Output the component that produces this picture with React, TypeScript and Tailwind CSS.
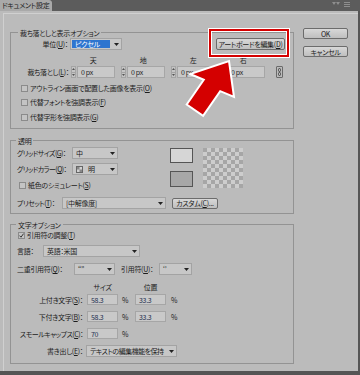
import React from "react";

function Caret() {
  return (
    <svg width="5" height="3" viewBox="0 0 5 3">
      <path d="M0 0h5L2.5 3z" fill="#222" />
    </svg>
  );
}

function Check({ on }: { on?: boolean }) {
  return (
    <span className="flex h-[7px] w-[7px] shrink-0 items-center justify-center border border-[#8b8b8b] bg-[#c4c4c4]">
      {on && (
        <svg width="5" height="5" viewBox="0 0 5 5">
          <path d="M0.5 2.6L2 4.2L4.6 0.6" fill="none" stroke="#333" strokeWidth="1" />
        </svg>
      )}
    </span>
  );
}

function Select({ className, children, hl }: { className: string; children: React.ReactNode; hl?: boolean }) {
  return (
    <div className={`flex h-[12px] shrink-0 items-stretch border border-[#a3a3a3] bg-[#c7c7c7] ${className}`}>
      <div
        className={`flex min-w-0 flex-1 items-center overflow-hidden pl-[3px] ${
          hl ? "m-[1px] bg-[#2e75cf] text-white" : ""
        }`}
      >
        {children}
      </div>
      <div className="flex w-[10px] items-center justify-center">
        <Caret />
      </div>
    </div>
  );
}

function Btn({ className, children }: { className: string; children: React.ReactNode }) {
  return (
    <div
      className={`flex shrink-0 items-center justify-center rounded-[2px] border border-[#6c6c6c] bg-linear-to-b from-[#d8d8d8] to-[#bfbfbf] ${className}`}
    >
      {children}
    </div>
  );
}

function Spin() {
  return (
    <div className="flex h-[12px] w-[5px] shrink-0 flex-col border border-[#a4a4a4] bg-[#c4c4c4]">
      <div className="flex flex-1 items-center justify-center border-b border-[#a4a4a4]">
        <svg width="3" height="2" viewBox="0 0 3 2">
          <path d="M1.5 0L3 2H0z" fill="#555" />
        </svg>
      </div>
      <div className="flex flex-1 items-center justify-center">
        <svg width="3" height="2" viewBox="0 0 3 2">
          <path d="M0 0h3L1.5 2z" fill="#555" />
        </svg>
      </div>
    </div>
  );
}

function Box({ className, children }: { className: string; children: React.ReactNode }) {
  return (
    <div className={`flex h-full shrink-0 items-center border border-[#a6a6a6] bg-[#c9c9c9] pl-[3px] ${className}`}>
      {children}
    </div>
  );
}

function Legend({ className, children }: { className: string; children: React.ReactNode }) {
  return (
    <div className={`-mt-[5px] h-[10px] w-fit bg-[#bbbbbb] px-[2px] leading-[10px] ${className}`}>{children}</div>
  );
}

function Group() {
  return (
    <div className="flex h-[12px] w-[44px] gap-[1px]">
      <Spin />
      <Box className="flex-1 text-[#222]">0 px</Box>
    </div>
  );
}

export default function App() {
  const cells = Array.from({ length: 100 }, (_, i) => i);

  return (
    <div className="flex h-[375px] w-[360px] flex-col overflow-hidden whitespace-nowrap bg-[#565656] font-['Noto_Sans_CJK_JP',sans-serif] text-[7px] leading-[10px] tracking-[-0.3px] text-[#1c1c1c] [font-feature-settings:'palt']">
      {/* title bar */}
      <div className="flex h-[11px] shrink-0">
        <div className="w-[52px] rounded-tr-[3px] bg-[#a9a9a9] pl-[2px] leading-[11px] text-[#222]">ドキュメント設定</div>
        <div className="flex flex-1 items-start justify-end gap-[4px] bg-[#5c5c5c] pr-[10px] pt-[2px]">
          <svg width="8" height="5" viewBox="0 0 8 5">
            <path d="M0 0h4L2 3zM4 0h4L6 3z" fill="#8e8e8e" />
          </svg>
          <svg width="6" height="5" viewBox="0 0 6 5">
            <path d="M0 0h6v1H0zM0 2h6v1H0zM0 4h6v1H0z" fill="#8e8e8e" />
          </svg>
        </div>
      </div>

      {/* body */}
      <div className="relative h-[360px] w-[358px] shrink-0 bg-[#bbbbbb] pl-[3px] pt-[2px]">
        <div className="flex h-full border-l border-t border-[#d0d0d0]">
          {/* left column */}
          <div className="ml-[6px] flex w-[284px] flex-col pt-[18px]">
            {/* bleed & view options */}
            <div className="flex h-[97px] flex-col border border-[#939393]">
              <Legend className="ml-[7px]">裁ち落としと表示オプション</Legend>
              <div className="flex h-[12px] items-center">
                <div className="w-[59px] pr-[2px] text-right">
                  単位(<u>U</u>)：
                </div>
                <Select className="w-[52px]" hl>
                  ピクセル
                </Select>
                <div className="flex-1" />
                <Btn className="mr-[8px] h-[12px] w-[69px]">
                  アートボードを編集(<u>D</u>)
                </Btn>
              </div>
              <div className="mt-[5px] flex h-[10px] gap-[6px] pl-[60px]">
                {["天", "地", "左", "右"].map((t) => (
                  <div key={t} className="w-[44px] text-center">
                    {t}
                  </div>
                ))}
              </div>
              <div className="mt-[1px] flex h-[12px] items-center">
                <div className="w-[60px] pr-[2px] text-right">
                  裁ち落とし(<u>L</u>)：
                </div>
                <div className="flex gap-[6px]">
                  <Group />
                  <Group />
                  <Group />
                  <Group />
                </div>
                <div className="ml-[11px] flex h-[12px] w-[7px] items-center justify-center rounded-[1px] border border-[#6a6a6a]">
                  <svg width="3" height="8" viewBox="0 0 3 8">
                    <rect x="0.5" y="0.5" width="2" height="3" rx="1" fill="none" stroke="#333" strokeWidth="0.8" />
                    <rect x="0.5" y="4.5" width="2" height="3" rx="1" fill="none" stroke="#333" strokeWidth="0.8" />
                  </svg>
                </div>
              </div>
              <div className="mt-[3px] flex h-[14px] items-center gap-[2px] pl-[10px]">
                <Check />
                <span>
                  アウトライン画面で配置した画像を表示(<u>O</u>)
                </span>
              </div>
              <div className="flex h-[14px] items-center gap-[2px] pl-[10px]">
                <Check />
                <span>
                  代替フォントを強調表示(<u>F</u>)
                </span>
              </div>
              <div className="mt-[1px] flex h-[14px] items-center gap-[2px] pl-[10px]">
                <Check />
                <span>
                  代替字形を強調表示(<u>G</u>)
                </span>
              </div>
            </div>

            {/* transparency */}
            <div className="mt-[11px] flex h-[74px] flex-col border border-[#939393]">
              <Legend className="ml-[5px]">透明</Legend>
              <div className="flex h-[45px]">
                <div className="flex w-[159px] flex-col">
                  <div className="mt-[1px] flex h-[12px] items-center">
                    <div className="w-[61px] pl-[6px] tracking-[-0.6px]">
                      グリッドサイズ(<u>G</u>)：
                    </div>
                    <Select className="w-[46px]">中</Select>
                  </div>
                  <div className="mt-[4px] flex h-[12px] items-center">
                    <div className="w-[61px] pl-[6px] tracking-[-0.6px]">
                      グリッドカラー(<u>Q</u>)：
                    </div>
                    <Select className="w-[46px]">
                      <svg width="7" height="7" viewBox="0 0 7 7" className="mr-[5px]">
                        <rect x="0.5" y="0.5" width="6" height="6" fill="#d2d2d2" stroke="#666" strokeWidth="1" />
                        <path d="M1 1h2.5v2.5H1zM3.5 3.5H6V6H3.5z" fill="#888" />
                      </svg>
                      明
                    </Select>
                  </div>
                  <div className="mt-[4px] flex h-[12px] items-center gap-[2px] pl-[8px]">
                    <Check />
                    <span>
                      紙色のシミュレート(<u>S</u>)
                    </span>
                  </div>
                </div>
                <div className="flex flex-col gap-[8px] pt-[2px]">
                  <div className="h-[15px] w-[23px] border border-[#555] bg-[#d6d6d6]" />
                  <div className="h-[16px] w-[23px] border border-[#555] bg-[#a7a7a7]" />
                </div>
                <div className="ml-[10px] mt-[2px] grid h-[40px] w-[40px] grid-cols-10">
                  {cells.map((i) => (
                    <div
                      key={i}
                      className={(Math.floor(i / 10) + i) % 2 === 0 ? "bg-[#a6a6a6]" : "bg-[#cdcdcd]"}
                    />
                  ))}
                </div>
              </div>
              <div className="mt-[6px] flex h-[12px] items-center">
                <div className="w-[51px] pl-[6px] tracking-[-0.5px]">
                  プリセット(<u>T</u>)：
                </div>
                <Select className="w-[104px]">[中解像度]</Select>
                <Btn className="ml-[6px] h-[11px] w-[46px]">
                  カスタム(<u>C</u>)...
                </Btn>
              </div>
            </div>

            {/* type options */}
            <div className="mt-[10px] flex h-[140px] flex-col border border-[#939393]">
              <Legend className="ml-[5px]">文字オプション</Legend>
              <div className="flex h-[10px] items-center gap-[2px] pl-[7px]">
                <Check on />
                <span>
                  引用符の調整(<u>T</u>)
                </span>
              </div>
              <div className="mt-[5px] flex h-[12px] items-center">
                <div className="w-[32px] pl-[6px]">言語：</div>
                <Select className="w-[97px]">英語：米国</Select>
              </div>
              <div className="mt-[6px] flex h-[12px] items-center">
                <div className="w-[63px] pl-[6px]">
                  二重引用符(<u>Q</u>)：
                </div>
                <Select className="w-[41px]">“”</Select>
                <div className="w-[44px] pl-[6px]">
                  引用符(<u>U</u>)：
                </div>
                <Select className="w-[33px]">‘’</Select>
              </div>
              <div className="mt-[7px] flex h-[10px] pl-[76px]">
                <div className="w-[31px] text-center">サイズ</div>
                <div className="w-[17px]" />
                <div className="w-[31px] text-center">位置</div>
              </div>
              <div className="mt-[2px] flex h-[11px] items-center">
                <div className="w-[76px] pr-[4px] text-right">
                  上付き文字(<u>S</u>)：
                </div>
                <Box className="w-[31px] text-[#1f3050]">58.3</Box>
                <div className="w-[17px] pl-[4px]">%</div>
                <Box className="w-[31px] text-[#1f3050]">33.3</Box>
                <div className="pl-[5px]">%</div>
              </div>
              <div className="mt-[6px] flex h-[11px] items-center">
                <div className="w-[76px] pr-[4px] text-right">
                  下付き文字(<u>B</u>)：
                </div>
                <Box className="w-[31px] text-[#1f3050]">58.3</Box>
                <div className="w-[17px] pl-[4px]">%</div>
                <Box className="w-[31px] text-[#1f3050]">33.3</Box>
                <div className="pl-[5px]">%</div>
              </div>
              <div className="mt-[6px] flex h-[11px] items-center">
                <div className="w-[76px] pr-[4px] text-right tracking-[-0.5px]">
                  スモールキャップス(<u>C</u>)：
                </div>
                <Box className="w-[31px] text-[#1f3050]">70</Box>
                <div className="w-[17px] pl-[4px]">%</div>
              </div>
              <div className="mt-[6px] flex h-[12px] items-center">
                <div className="w-[75px] pr-[3px] text-right">
                  書き出し(<u>E</u>)：
                </div>
                <Select className="w-[91px] tracking-[-0.5px]">テキストの編集機能を保持</Select>
              </div>
            </div>
          </div>

          {/* right column */}
          <div className="ml-[9px] flex flex-col pt-[14px]">
            <Btn className="h-[11px] w-[45px]">OK</Btn>
            <Btn className="mt-[7px] h-[11px] w-[45px]">キャンセル</Btn>
          </div>
        </div>

        {/* annotation: red frame */}
        <div className="absolute left-[208px] top-[17px] h-[30px] w-[82px] border border-white">
          <div className="h-full border-2 border-[#d40000]">
            <div className="h-full border border-white" />
          </div>
        </div>

        {/* annotation: red arrow */}
        <svg className="absolute left-[180px] top-[39px]" width="62" height="72" viewBox="0 0 62 72">
          <polygon
            points="49,11 54,47 40.2,41.2 23.1,65.9 6.7,54.5 23.8,29.8 10,24"
            fill="#d40000"
            stroke="#ffffff"
            strokeWidth="2"
            strokeLinejoin="miter"
          />
        </svg>
      </div>

      <div className="flex-1 bg-[#555]" />
    </div>
  );
}
